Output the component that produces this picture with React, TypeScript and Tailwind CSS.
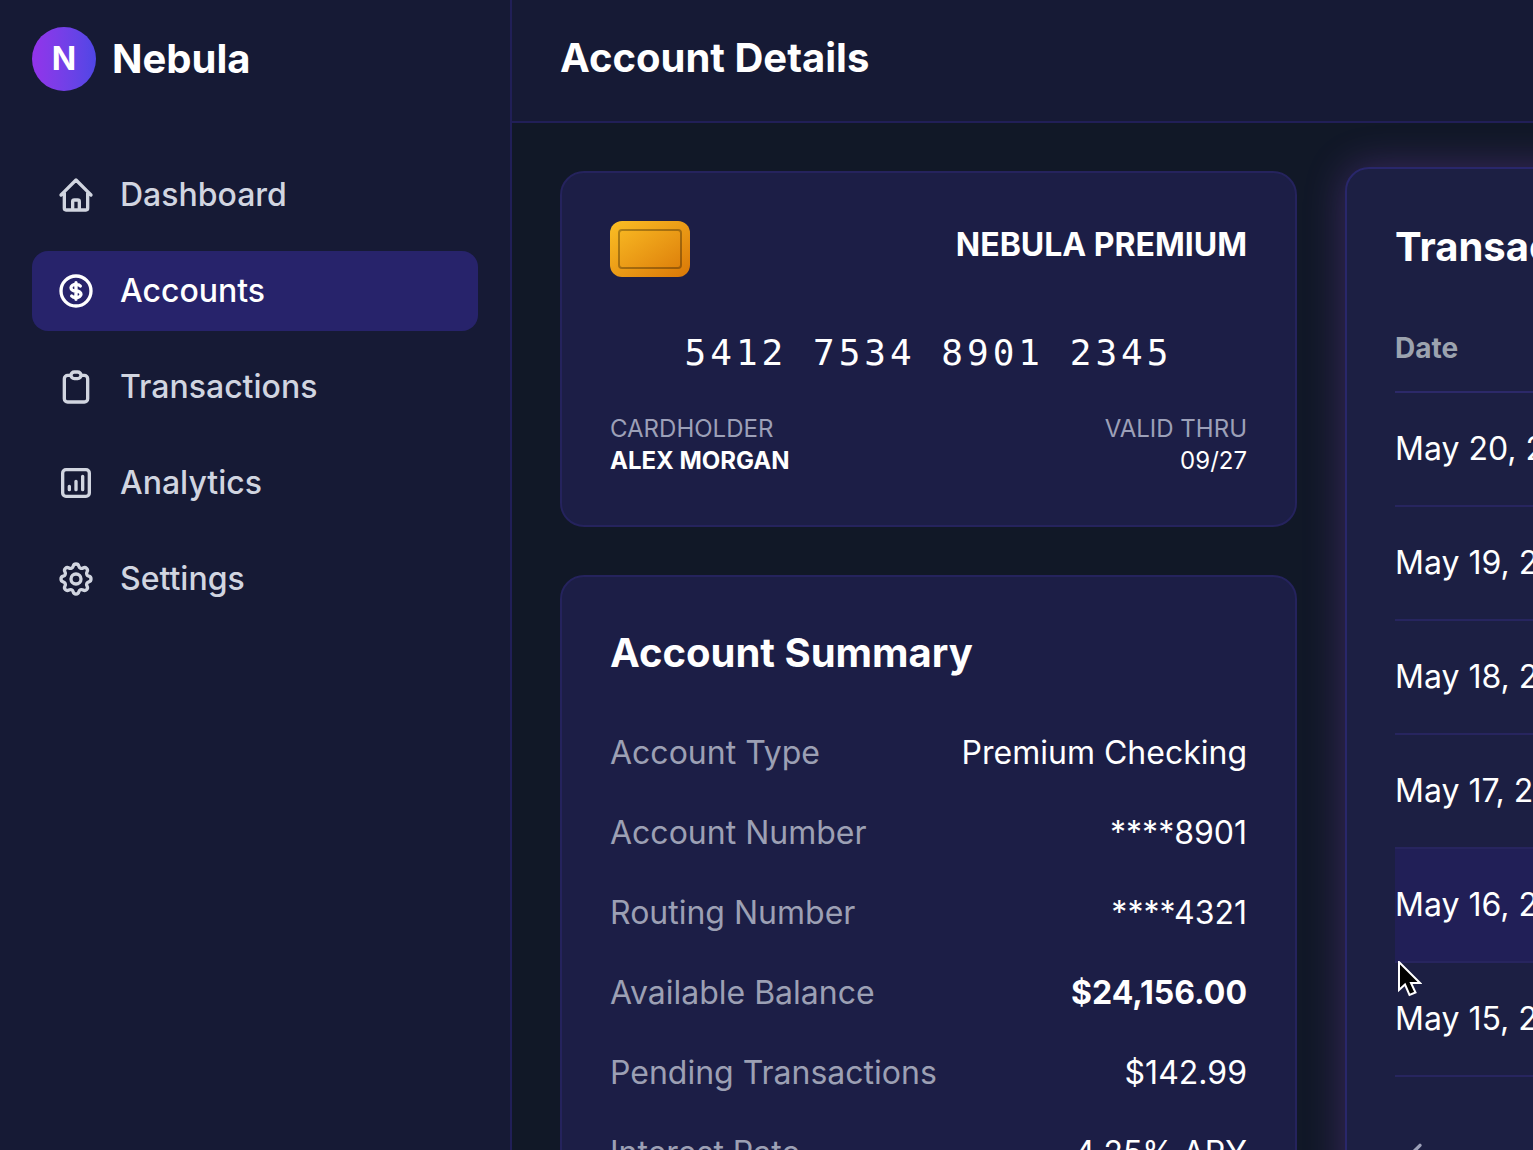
import * as React from 'react';
import clsx from 'clsx';

interface NavItem {
  label: string;
  paths: string[];
  active?: boolean;
}

interface SummaryRow {
  label: string;
  value: string;
  strong?: boolean;
}

const NAV_ITEMS: NavItem[] = [
  {
    label: 'Dashboard',
    paths: [
      'M3 12l2-2m0 0l7-7 7 7M5 10v10a1 1 0 001 1h3m10-11l2 2m-2-2v10a1 1 0 01-1 1h-3m-6 0a1 1 0 001-1v-4a1 1 0 011-1h2a1 1 0 011 1v4a1 1 0 001 1m-6 0h6',
    ],
  },
  {
    label: 'Accounts',
    active: true,
    paths: [
      'M12 8c-1.657 0-3 .895-3 2s1.343 2 3 2 3 .895 3 2-1.343 2-3 2m0-8c1.11 0 2.08.402 2.599 1M12 8V7m0 1v8m0 0v1m0-1c-1.11 0-2.08-.402-2.599-1M21 12a9 9 0 11-18 0 9 9 0 0118 0z',
    ],
  },
  {
    label: 'Transactions',
    paths: [
      'M9 5H7a2 2 0 00-2 2v12a2 2 0 002 2h10a2 2 0 002-2V7a2 2 0 00-2-2h-2M9 5a2 2 0 002 2h2a2 2 0 002-2M9 5a2 2 0 012-2h2a2 2 0 012 2',
    ],
  },
  {
    label: 'Analytics',
    paths: ['M16 8v8m-4-5v5m-4-2v2m-2 4h12a2 2 0 002-2V6a2 2 0 00-2-2H6a2 2 0 00-2 2v12a2 2 0 002 2z'],
  },
  {
    label: 'Settings',
    paths: [
      'M10.325 4.317c.426-1.756 2.924-1.756 3.35 0a1.724 1.724 0 002.573 1.066c1.543-.94 3.31.826 2.37 2.37a1.724 1.724 0 001.065 2.572c1.756.426 1.756 2.924 0 3.35a1.724 1.724 0 00-1.066 2.573c.94 1.543-.826 3.31-2.37 2.37a1.724 1.724 0 00-2.572 1.065c-.426 1.756-2.924 1.756-3.35 0a1.724 1.724 0 00-2.573-1.066c-1.543.94-3.31-.826-2.37-2.37a1.724 1.724 0 00-1.065-2.572c-1.756-.426-1.756-2.924 0-3.35a1.724 1.724 0 001.066-2.573c-.94-1.543.826-3.31 2.37-2.37.996.608 2.296.07 2.572-1.065z',
      'M15 12a3 3 0 11-6 0 3 3 0 016 0z',
    ],
  },
];

const SUMMARY: SummaryRow[] = [
  { label: 'Account Type', value: 'Premium Checking' },
  { label: 'Account Number', value: '****8901' },
  { label: 'Routing Number', value: '****4321' },
  { label: 'Available Balance', value: '$24,156.00', strong: true },
  { label: 'Pending Transactions', value: '$142.99' },
  { label: 'Interest Rate', value: '4.25% APY' },
];

const DATES = ['May 20, 2023', 'May 19, 2023', 'May 18, 2023', 'May 17, 2023', 'May 16, 2023', 'May 15, 2023'];
const HOVERED_DATE = 'May 16, 2023';

function StrokeIcon({ paths, className }: { paths: string[]; className?: string }) {
  return (
    <svg
      viewBox="0 0 24 24"
      fill="none"
      stroke="currentColor"
      strokeWidth={2}
      strokeLinecap="round"
      strokeLinejoin="round"
      aria-hidden="true"
      className={clsx('shrink-0', className)}
    >
      {paths.map((d) => (
        <path key={d} d={d} />
      ))}
    </svg>
  );
}

function Sidebar() {
  return (
    <aside className="w-128 shrink-0 border-r-2 border-[#211f57] bg-[#161a35] px-8 pt-[27px]">
      <div className="mb-16 flex items-center gap-4">
        <div className="flex size-16 items-center justify-center rounded-full bg-linear-to-r from-[#9333ea] to-[#4f46e5] text-[32px] leading-none font-bold">
          N
        </div>
        <span className="text-[40px] leading-14 font-bold">Nebula</span>
      </div>
      <nav className="flex flex-col gap-4">
        {NAV_ITEMS.map((item) => (
          <a
            key={item.label}
            href="#"
            className={clsx(
              'flex h-20 items-center gap-6 rounded-2xl px-6 text-[32px] leading-12 font-medium',
              item.active ? 'bg-[#27236b] text-white' : 'text-[#d1d5e0]'
            )}
          >
            <StrokeIcon paths={item.paths} className="size-10" />
            {item.label}
          </a>
        ))}
      </nav>
    </aside>
  );
}

function BankCard() {
  return (
    <section className="rounded-3xl border-2 border-[#25235d] bg-[#1c1e46] p-12">
      <div className="flex items-start justify-between">
        {/* Chip */}
        <div className="h-14 w-20 rounded-xl bg-linear-to-br from-[#fbbf24] to-[#d97706] p-2">
          <div className="h-full rounded-sm border-2 border-black/30" />
        </div>
        <span className="text-[32px] leading-12 font-bold">NEBULA PREMIUM</span>
      </div>
      <p className="mt-14 mb-10 text-center font-['DejaVu_Sans_Mono',monospace] text-4xl leading-10 tracking-[4px]">
        5412 7534 8901 2345
      </p>
      <div className="flex justify-between text-2xl leading-8">
        <div>
          <p className="text-[#9ca0b8]">CARDHOLDER</p>
          <p className="font-bold">ALEX MORGAN</p>
        </div>
        <div className="text-right">
          <p className="text-[#9ca0b8]">VALID THRU</p>
          <p>09/27</p>
        </div>
      </div>
    </section>
  );
}

function AccountSummary() {
  return (
    <section className="rounded-3xl border-2 border-[#25235d] bg-[#1c1e46] p-12">
      <h2 className="mb-12 text-[40px] leading-14 font-bold">Account Summary</h2>
      <dl className="flex flex-col gap-8 text-[32px] leading-12">
        {SUMMARY.map((row) => (
          <div key={row.label} className="flex justify-between">
            <dt className="text-[#9ca0b4]">{row.label}</dt>
            <dd className={clsx(row.strong && 'font-bold')}>{row.value}</dd>
          </div>
        ))}
      </dl>
    </section>
  );
}

function Pointer() {
  return (
    <svg viewBox="0 0 26 40" className="absolute -bottom-10 left-px z-10 h-10 w-[26px]" aria-hidden="true">
      <path
        d="M3 1v28l6-5.500 4.500 10.500 6-2.500L15 22H24z"
        fill="#000"
        stroke="#fff"
        strokeWidth="2"
      />
    </svg>
  );
}

function TransactionHistory() {
  return (
    <section className="-mt-1 w-[1520px] shrink-0 rounded-3xl border-2 border-[#29276b] bg-[#1c1f43] p-12 shadow-[0_0_40px_rgba(168,85,247,0.28)]">
      <h2 className="mb-7 text-[40px] leading-[60px] font-bold">Transaction History</h2>
      <table className="w-full border-separate border-spacing-0 text-left">
        <thead>
          <tr>
            <th className="h-[88px] border-b-2 border-[#2c2969] text-[28px] leading-10 font-bold text-[#9ca3af]">Date</th>
          </tr>
        </thead>
        <tbody className="text-[32px] leading-12">
          {DATES.map((date) => (
            <tr key={date} className={clsx(date === HOVERED_DATE && 'bg-[#211f57]')}>
              <td className="relative h-[114px] border-b-2 border-[#27255f]">
                {date}
                {date === HOVERED_DATE && <Pointer />}
              </td>
            </tr>
          ))}
        </tbody>
      </table>
      <div className="mt-[60px]">
        <button type="button" aria-label="Previous page" className="flex text-[#9ca0b8]">
          <StrokeIcon paths={['M15 19l-7-7 7-7']} className="size-10" />
        </button>
      </div>
    </section>
  );
}

export default function App() {
  return (
    <div className="flex h-screen overflow-hidden bg-[#111827] font-[Inter,sans-serif] text-white">
      <Sidebar />
      <main className="min-w-0 flex-1 overflow-hidden">
        <header className="border-b-2 border-[#211f57] bg-[#161a35] px-12 pt-[30px] pb-[35px]">
          <h1 className="text-[40px] leading-14 font-bold">Account Details</h1>
        </header>
        <div className="flex items-start gap-12 p-12">
          <div className="flex shrink-0 basis-[calc(80%-3px)] flex-col gap-12">
            <BankCard />
            <AccountSummary />
          </div>
          <TransactionHistory />
        </div>
      </main>
    </div>
  );
}
